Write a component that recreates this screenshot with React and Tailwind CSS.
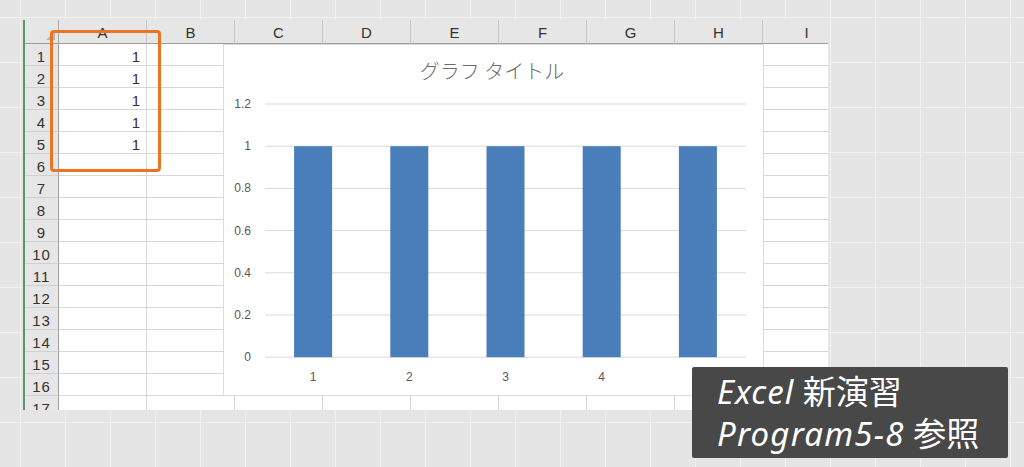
import React from 'react'

const cols = ['A', 'B', 'C', 'D', 'E', 'F', 'G', 'H', 'I']
const rows = Array.from({ length: 17 }, (_, i) => i + 1)
const values = [1, 1, 1, 1, 1]
const ticks = ['1.2', '1', '0.8', '0.6', '0.4', '0.2', '0']

function Chart(){
  const plotLeft = 41
  const plotRight = 522
  const top = 59
  const step = 42.2
  const zeroY = top + step * 6
  const cat = (plotRight - plotLeft) / values.length
  return (
    <div className="absolute left-[198px] top-[24px] w-[541px] h-[352px] bg-white border border-[#dcdcdc]">
      <svg width="539" height="350" viewBox="0 0 539 350" className="block">
        <text x="268" y="34" textAnchor="middle" fontSize="20" fill="#6b6b6b" fontFamily="'Noto Sans CJK JP', sans-serif" fontWeight="300">グラフ タイトル</text>
        {ticks.map((t, i) => (
          <g key={t}>
            <line x1={plotLeft} x2={plotRight} y1={top + i * step} y2={top + i * step} stroke="#d9d9d9" strokeWidth="1" />
            <text x="27" y={top + i * step + 4} textAnchor="end" fontSize="12" fill="#595959" fontFamily="'Liberation Sans', sans-serif">{t}</text>
          </g>
        ))}
        {values.map((v, i) => {
          const cx = plotLeft + cat * (i + 0.5)
          const h = v * step * 5
          return (
            <g key={i}>
              <rect x={cx - 19} y={zeroY - h} width="38" height={h} fill="#4a7ebb" />
              <text x={cx} y={zeroY + 24} textAnchor="middle" fontSize="12" fill="#595959" fontFamily="'Liberation Sans', sans-serif">{i + 1}</text>
            </g>
          )
        })}
      </svg>
    </div>
  )
}

export default function App(){
  return (
    <div className="relative w-[1024px] h-[467px] overflow-hidden bg-[#e5e5e5] bg-[linear-gradient(to_right,#f1f1f1_1px,transparent_1px),linear-gradient(to_bottom,#f1f1f1_1px,transparent_1px)] bg-[size:45px_45px] bg-[position:20px_17px] pt-[20px] pl-[23px] font-['Liberation_Sans',sans-serif]">
      <div className="relative w-[805px] h-[390px] overflow-hidden bg-white border-l-2 border-[#5c9470]">
        <div className="grid grid-cols-[34px_repeat(9,88px)] grid-rows-[24px_repeat(17,22px)] w-[826px] text-[15px] text-[#333]">
          {/* corner */}
          <div className="relative bg-[#e6e6e6] border-r border-b border-r-[#a8a8a8] border-b-[#9c9c9c]">
            <div className="absolute right-[3px] bottom-[3px] w-0 h-0 border-l-[9px] border-l-transparent border-b-[9px] border-b-[#b5b5b5]" />
          </div>
          {cols.map(c => (
            <div key={c} className="flex items-center justify-center bg-[#e6e6e6] border-r border-b border-r-[#c6c6c6] border-b-[#9c9c9c] leading-none pt-[2px]">{c}</div>
          ))}
          {rows.map(r => (
            <React.Fragment key={r}>
              <div className="flex items-center justify-center bg-[#e6e6e6] border-r border-b border-r-[#9c9c9c] border-b-[#cfcfcf] leading-none pt-[3px] tracking-[1px]">{r}</div>
              {cols.map((c, ci) => (
                <div key={c} className="flex items-center justify-end pr-[6px] border-r border-b border-[#d6d6d6] leading-none pt-[3px]">
                  {ci === 0 && r <= 5 ? '1' : ''}
                </div>
              ))}
            </React.Fragment>
          ))}
        </div>
        <Chart />
      </div>

      <div className="absolute left-[50px] top-[30px] w-[111px] h-[142px] border-[3.5px] border-[#eb7324] rounded-[4px]" />

      <div className="absolute left-[692px] top-[367px] w-[316px] h-[91px] bg-[#484848] rounded-[2px] pl-[25px] pt-[3px] text-white text-[33px] leading-[40px] font-['Noto_Sans','Noto_Sans_CJK_JP',sans-serif]">
        <div className="whitespace-nowrap"><span className="italic tracking-[1px]">Excel</span> <span className="font-['Noto_Sans_CJK_JP',sans-serif]">新演習</span></div>
        <div className="whitespace-nowrap"><span className="italic tracking-[1.2px]">Program5-8</span> <span className="font-['Noto_Sans_CJK_JP',sans-serif]">参照</span></div>
      </div>
    </div>
  )
}
